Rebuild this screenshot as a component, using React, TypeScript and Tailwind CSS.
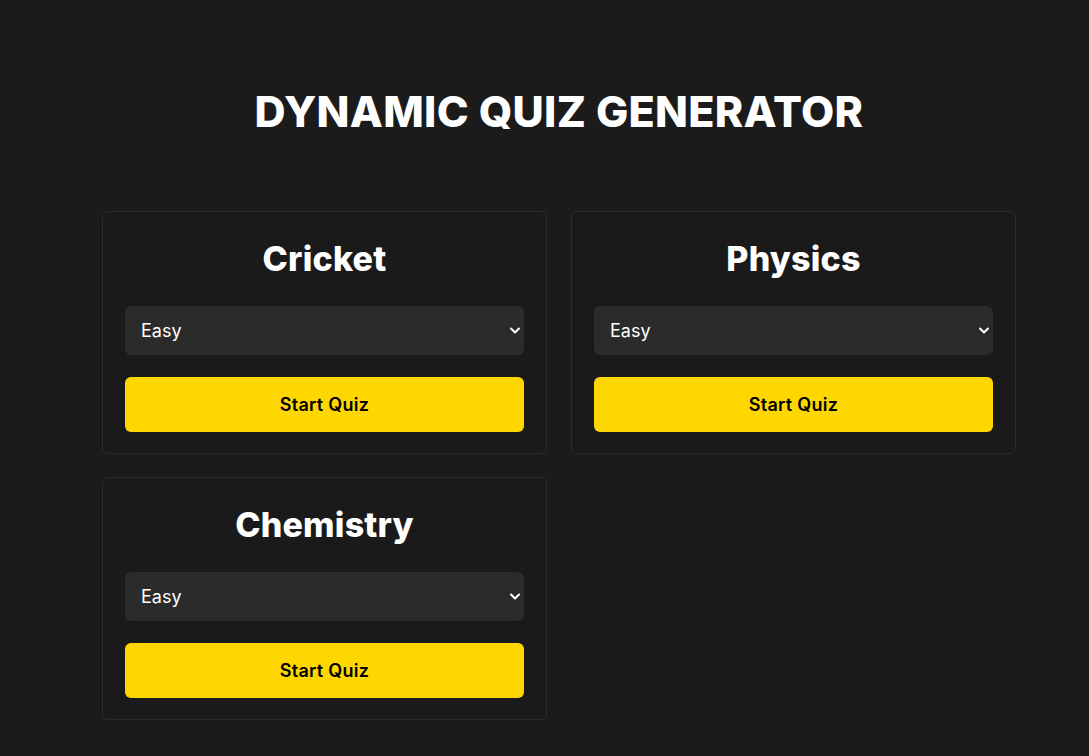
import { useState } from "react";

const topics = ["Cricket", "Physics", "Chemistry"];

function QuizCard({ title }: { title: string }) {
    const [level, setLevel] = useState("easy");

    return (
        <div className="rounded-md border border-[#2c2c2c] bg-[#1a1a1a] px-[22px] pt-[23px] pb-[21px]">
            <h2 className="text-center text-[34px] leading-[48px] font-extrabold tracking-[0.2px] text-white">{title}</h2>
            <div className="relative mt-[23px]">
                <select
                    value={level}
                    onChange={(e) => setLevel(e.target.value)}
                    className="w-full h-[49px] appearance-none rounded-md bg-[#2b2b2b] pl-4 pr-10 text-[18px] text-white outline-none"
                >
                    <option value="easy">Easy</option>
                    <option value="medium">Medium</option>
                    <option value="hard">Hard</option>
                </select>
                <svg
                    className="pointer-events-none absolute right-[3px] top-[20px] w-[12px] h-[9px]"
                    viewBox="0 0 12 9"
                    fill="none"
                    stroke="white"
                    strokeWidth="2"
                    strokeLinecap="round"
                    strokeLinejoin="round"
                >
                    <path d="M2 2.5l4 4 4-4" />
                </svg>
            </div>
            <button className="mt-[22px] w-full h-[55px] rounded-md bg-[#ffd700] text-[18px] font-semibold tracking-[0.3px] text-black">
                Start Quiz
            </button>
        </div>
    );
}

export default function App() {
    return (
        <div className="min-h-[756px] bg-[#1a1a1a] font-['Inter',sans-serif]">
            <div className="ml-[78px] w-[962px] min-h-[721px] bg-[#1b1b1b] px-6 pt-[84px]">
                <h1 className="text-center text-[43px] leading-[54px] font-extrabold tracking-[0.3px] text-white">DYNAMIC QUIZ GENERATOR</h1>
                <div className="mt-[73px] grid grid-cols-2 gap-x-6 gap-y-[23px]">
                    {topics.map((t) => (
                        <QuizCard key={t} title={t} />
                    ))}
                </div>
            </div>
        </div>
    );
}
